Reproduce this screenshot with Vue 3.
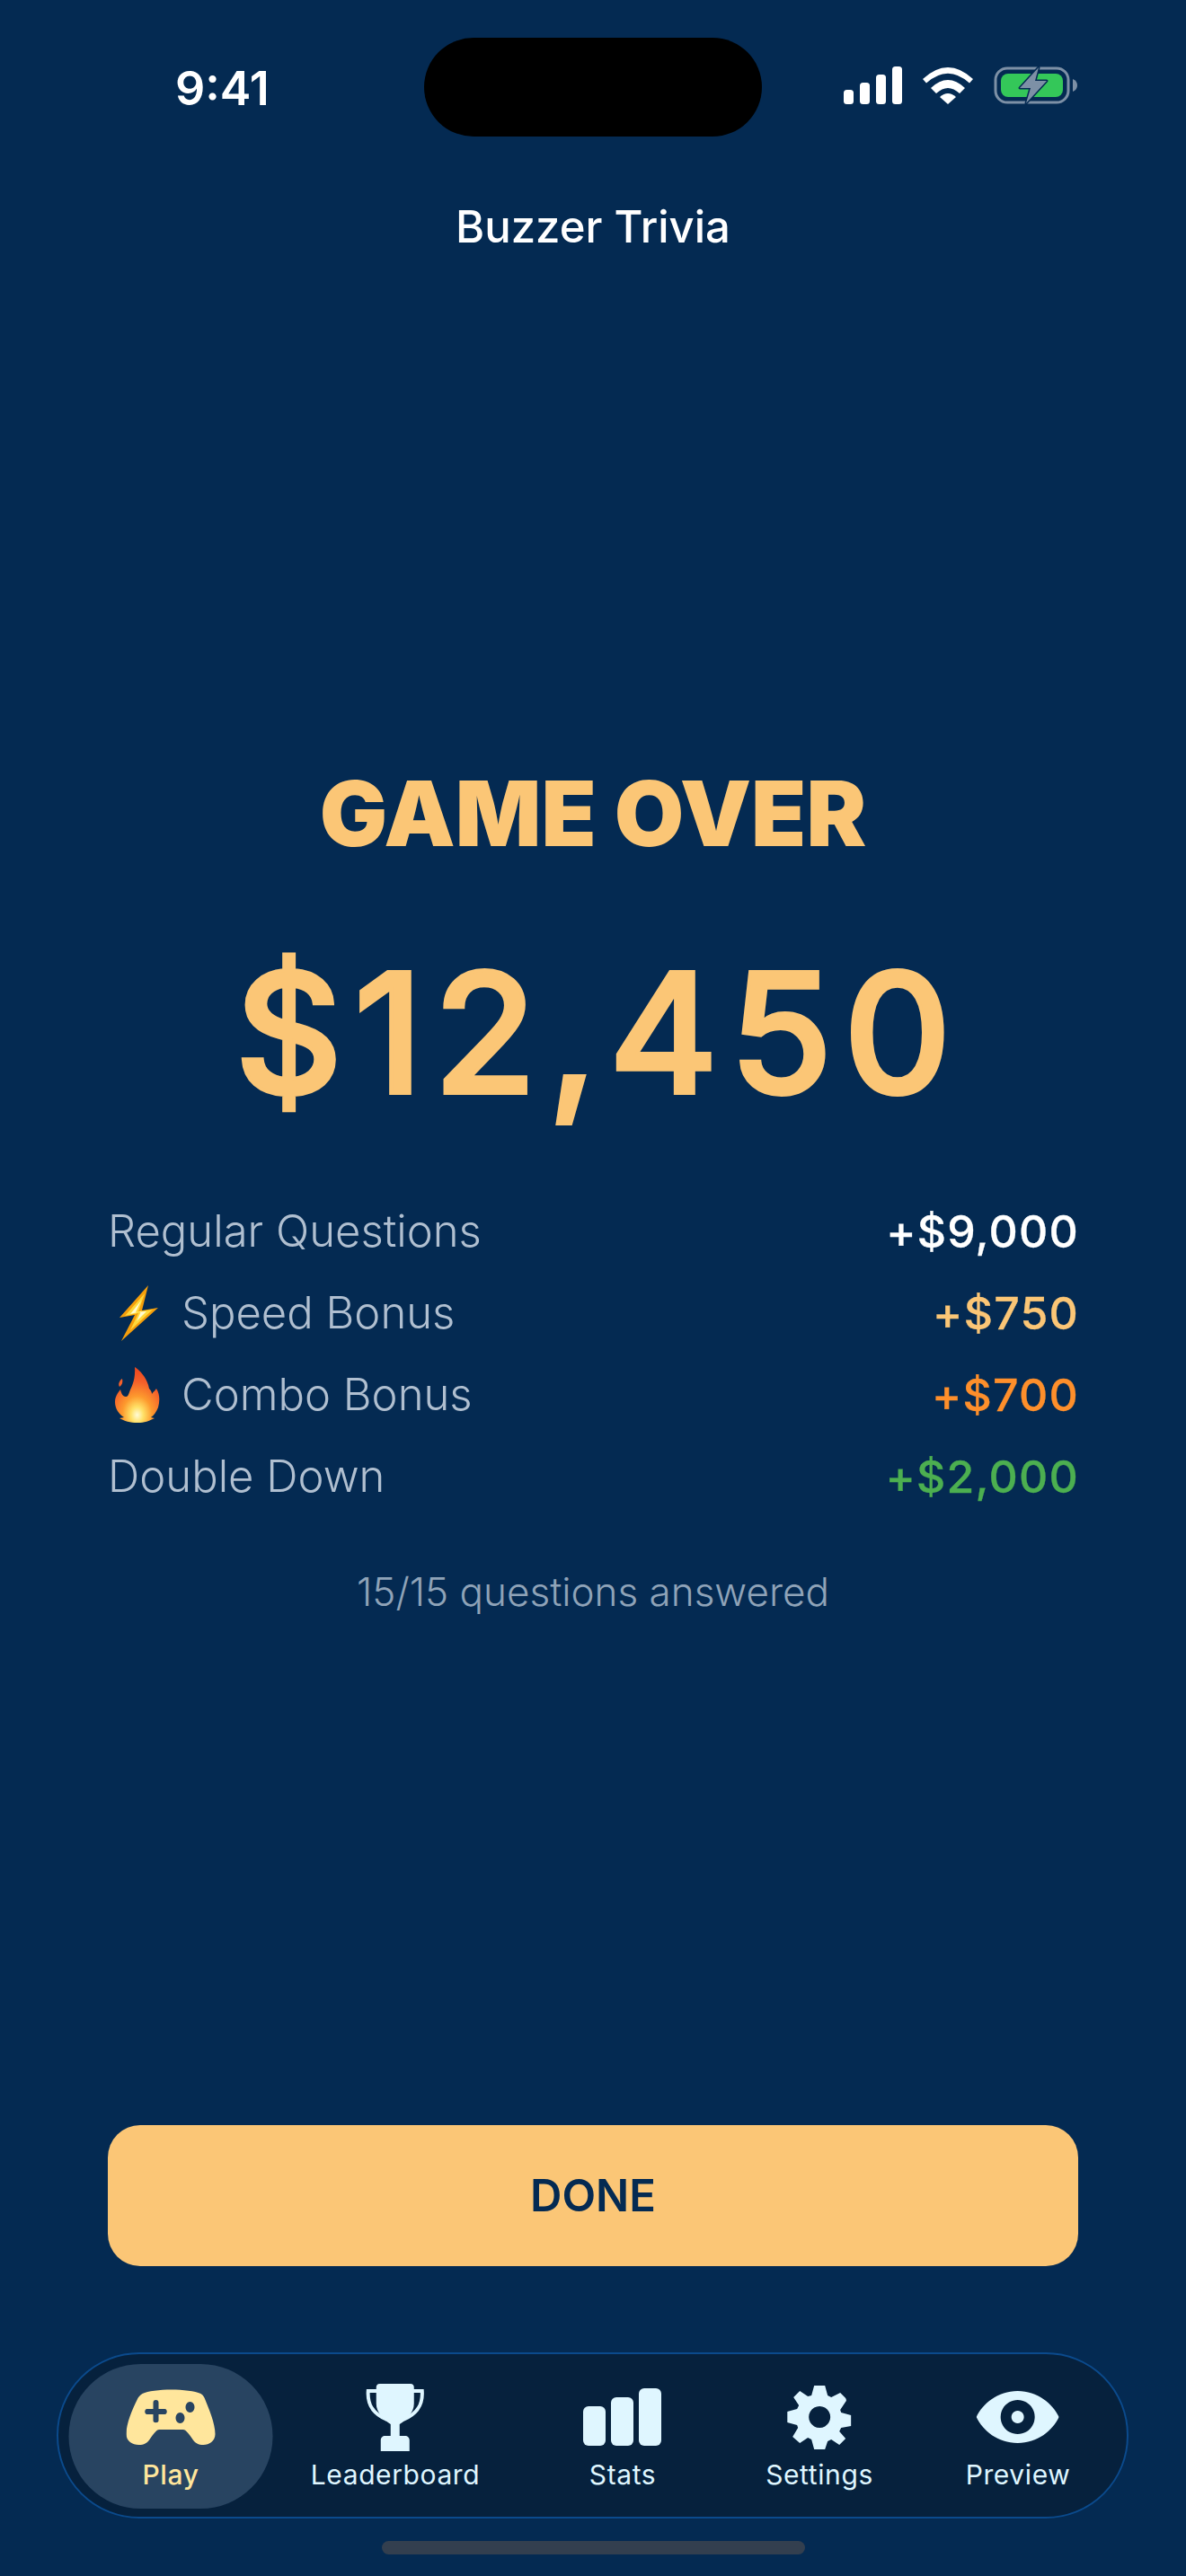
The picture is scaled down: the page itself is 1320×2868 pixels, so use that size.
<template>
  <div class="screen">
    <div class="status">
      <span class="time">9:41</span>
      <div class="island"></div>
      <div class="status-icons">
        <svg width="66" height="42" viewBox="0 0 66 42">
          <rect x="1" y="26" width="11" height="16" rx="3.5" fill="#fff" />
          <rect x="19" y="18" width="11" height="24" rx="3.5" fill="#fff" />
          <rect x="37" y="9" width="11" height="33" rx="3.5" fill="#fff" />
          <rect x="55" y="0" width="11" height="42" rx="3.5" fill="#fff" />
        </svg>
        <svg width="58" height="42" viewBox="0 0 58 42">
          <path d="M1 14 Q29 -12 57 14 L53 18.500 Q29 -3 5 18.500 Z" fill="#fff" />
          <path d="M10 24 Q29 6 48 24 L42 30 Q29 18 16 30 Z" fill="#fff" />
          <path d="M20 34 Q29 26 38 34 L29 42 Z" fill="#fff" />
        </svg>
        <svg width="94" height="44" viewBox="0 0 94 44">
          <rect x="2" y="3" width="81" height="38" rx="13" fill="none" stroke="#7d90a6" stroke-width="3" />
          <rect x="8" y="9" width="69" height="26" rx="8" fill="#34c759" />
          <path d="M88 15 Q93 17 93 22 Q93 27 88 29 Z" fill="#7d90a6" />
          <path d="M50 2 L29 25 H41 L36 42 L59 17 H46 Z" fill="#7d90a6" stroke="#042a52" stroke-width="3" stroke-linejoin="round" paint-order="stroke" />
        </svg>
      </div>
    </div>

    <div class="title">Buzzer Trivia</div>

    <div class="result">
      <h1 class="over">GAME OVER</h1>
      <div class="total">$12,450</div>

      <div class="rows">
        <div v-for="row in rows" :key="row.label" class="row">
          <span class="label">
            <svg v-if="row.icon === 'bolt'" class="emoji" viewBox="0 0 50 62">
              <path d="M37 0 L5 36 L22 33 L7 62 L48 25 L30 28 Z" fill="#f59e0b" />
              <path d="M33 9 L11 34 L26 31 L17 50 L42 27 L26 29 Z" fill="#ffd93b" />
              <path d="M29 17 L17 32 L29 29 L24 40 L35 29 L23 30 Z" fill="#fffbd0" />
            </svg>
            <svg v-if="row.icon === 'fire'" class="emoji" viewBox="0 0 50 62">
              <defs>
                <radialGradient id="flame" cx="0.5" cy="0.86" r="0.8">
                  <stop offset="0" stop-color="#fffbd6" />
                  <stop offset="0.18" stop-color="#ffe066" />
                  <stop offset="0.42" stop-color="#fd9a2e" />
                  <stop offset="0.75" stop-color="#f4602a" />
                  <stop offset="1" stop-color="#ee4a20" />
                </radialGradient>
              </defs>
              <path d="M5 22 C3 19 5 15 8 13 C9 17 8 20 5 22 Z" fill="#f4602a" />
              <path d="M22 0 C27 3 36 12 38 24 C40 26 41 28 41 30 C43 27 45 26 46 24 C50 30 50 38 48 45 C46 50 43 54 40 56 L44 57 C38 60 33 62 25 62 C17 62 10 60 5 57 L10 56 C4 52 0 46 0 39 C0 33 3 29 6 25 C7 30 9 33 12 33 C14 33 15 31 16 28 C18 22 23 16 22 0 Z" fill="url(#flame)" />
            </svg>
            {{ row.label }}
          </span>
          <span class="value" :style="{ color: row.color }">{{ row.value }}</span>
        </div>
      </div>

      <p class="answered">15/15 questions answered</p>
    </div>

    <button class="done">DONE</button>

    <nav class="tabbar">
      <div v-for="tab in tabs" :key="tab.name" class="tab" :class="[tab.cls, { active: tab.active }]">
        <div class="tab-icon">
          <svg v-if="tab.name === 'Play'" width="100" height="62" viewBox="0 0 100 62">
            <path fill-rule="evenodd" fill="#ffe69c" d="M18 5 C30 -1 70 -1 83 5 C86 7 87 9 88 12 C92 22 99 38 99 50 C99 58 92 62 86 62 C80 62 77 60 74 56 C72 53 70 50 67 47 C65 45 64 45 62 45 H38 C36 45 35 45 33 47 C30 50 28 53 26 56 C23 60 20 62 14 62 C7 62 0 58 0 50 C0 38 7 22 12 12 C13 9 15 7 18 5 Z M33 12 C31 12 30 13 30 15 V22 H23 C20 22 20 28 23 28 H30 V35 C30 38 36 38 36 35 V28 H43 C46 28 46 22 43 22 H36 V15 C36 13 35 12 33 12 Z M71 14 A5 6 0 1 0 71.010 14 Z M60 26 A5 6 0 1 0 60.010 26 Z" />
          </svg>
          <svg v-if="tab.name === 'Leaderboard'" width="66" height="75" viewBox="0 0 66 75">
            <path fill="none" stroke="#dff6ff" stroke-width="4" d="M13 8 H3 C2 22 7 33 24 40 M53 8 H63 C64 22 59 33 42 40" />
            <path fill="#dff6ff" d="M16 0 H50 C53 0 54 2 54 4 V22 C54 32 46 40 38 45 V58 H44 C47 58 49 60 49 63 V75 H17 V63 C17 60 19 58 22 58 H28 V45 C20 40 12 32 12 22 V4 C12 2 13 0 16 0 Z" />
          </svg>
          <svg v-if="tab.name === 'Stats'" width="88" height="64" viewBox="0 0 88 64">
            <rect x="0" y="20" width="25" height="44" rx="6" fill="#dff6ff" />
            <rect x="31" y="10" width="25" height="54" rx="6" fill="#dff6ff" />
            <rect x="62" y="0" width="25" height="64" rx="6" fill="#dff6ff" />
          </svg>
          <svg v-if="tab.name === 'Settings'" width="72" height="72" viewBox="0 0 72 72">
            <path fill-rule="evenodd" fill="#dff6ff" d="M30 1 H42 L45 12 L49 14 L59 9 L65 15 C66 17 66 18 65 19 L59 28 L60 31 L71 34 V46 L60 48 L58 52 L65 60 L58 67 L49 61 L45 63 L42 72 H30 L27 61 L23 59 L14 65 L6 58 L12 48 L11 45 L0 42 V30 L11 27 L13 23 L7 14 L14 7 L23 13 L27 12 Z M36 24 A12 12 0 1 0 36.010 24 Z" />
          </svg>
          <svg v-if="tab.name === 'Preview'" width="92" height="58" viewBox="0 0 92 58">
            <path fill-rule="evenodd" fill="#dff6ff" d="M46 0 C68 0 85 14 92 29 C85 44 68 58 46 58 C24 58 7 44 0 29 C7 14 24 0 46 0 Z M46 10 A19 19 0 1 0 46.010 10 Z M46 22 A7 7 0 1 1 45.990 22 Z" />
          </svg>
        </div>
        <span class="tab-label">{{ tab.name }}</span>
      </div>
    </nav>

    <div class="home-bar"></div>
  </div>
</template>

<script setup>
const rows = [
  { label: 'Regular Questions', value: '+$9,000', color: '#ffffff' },
  { label: 'Speed Bonus', value: '+$750', color: '#fbc676', icon: 'bolt' },
  { label: 'Combo Bonus', value: '+$700', color: '#fe8f2b', icon: 'fire' },
  { label: 'Double Down', value: '+$2,000', color: '#4caf50' },
]

const tabs = [
  { name: 'Play', cls: 'play', active: true },
  { name: 'Leaderboard', cls: 'leader' },
  { name: 'Stats', cls: 'stats' },
  { name: 'Settings', cls: 'settings' },
  { name: 'Preview', cls: 'preview' },
]
</script>

<style>
html,
body {
  margin: 0;
  background: #042a52;
}
</style>

<style scoped>
.screen {
  width: 1320px;
  height: 2868px;
  background: #042a52;
  font-family: Inter, "Noto Sans", sans-serif;
  color: #fff;
  display: flex;
  flex-direction: column;
  overflow: hidden;
}
.status {
  height: 110px;
  padding-top: 42px;
  display: flex;
  position: relative;
  box-sizing: content-box;
}
.time {
  margin-left: 195px;
  width: 277px;
  font-size: 52px;
  font-weight: 600;
  line-height: 114px;
}
.island {
  width: 376px;
  height: 110px;
  border-radius: 55px;
  background: #000;
}
.status-icons {
  margin-left: 90px;
  height: 110px;
  display: flex;
  align-items: center;
  gap: 22px;
  padding-bottom: 4px;
  box-sizing: border-box;
}
.title {
  margin-top: 71px;
  text-align: center;
  font-size: 49px;
  font-weight: 500;
  line-height: 60px;
}
.result {
  margin-top: 563px;
  display: flex;
  flex-direction: column;
  align-items: center;
}
.over {
  margin: 0;
  font-size: 100px;
  font-weight: 900;
  line-height: 120px;
  color: #fbc676;
}
.total {
  margin-top: 68px;
  padding-left: 12px;
  font-size: 186px;
  font-weight: 500;
  line-height: 232px;
  letter-spacing: 12px;
  color: #fbc676;
  -webkit-text-stroke: 4px #fbc676;
}
.rows {
  margin-top: 75px;
  width: 1080px;
  display: flex;
  flex-direction: column;
  gap: 31px;
}
.row {
  display: flex;
  justify-content: space-between;
  align-items: center;
  height: 60px;
  font-size: 49px;
  line-height: 60px;
}
.label {
  color: #b0bfd0;
  font-weight: 350;
  display: flex;
  align-items: center;
}
.emoji {
  width: 50px;
  height: 62px;
  margin-left: 8px;
  margin-right: 24px;
}
.value {
  font-weight: 500;
  font-size: 50px;
  letter-spacing: 1.2px;
  margin-right: -1px;
  -webkit-text-stroke: 0.3px currentColor;
}
.answered {
  margin: 70px 0 0;
  font-size: 44px;
  line-height: 56px;
  font-weight: 350;
  color: #8fa3b8;
}
.done {
  position: absolute;
  left: 120px;
  top: 2366px;
  width: 1080px;
  height: 157px;
  border: 0;
  border-radius: 36px;
  background: #fbc676;
  color: #042a52;
  font-family: inherit;
  font-size: 49px;
  font-weight: 600;
}
.tabbar {
  position: absolute;
  left: 63px;
  top: 2619px;
  width: 1193px;
  height: 185px;
  box-sizing: border-box;
  border: 2px solid #0b4a8c;
  border-radius: 92px;
  background: #06213d;
}
.tab {
  position: absolute;
  top: 11px;
  height: 161px;
  padding-top: 19px;
  display: flex;
  flex-direction: column;
  align-items: center;
  box-sizing: border-box;
  transform: translateX(-50%);
  white-space: nowrap;
}
.tab-icon {
  height: 80px;
  display: flex;
  align-items: center;
  justify-content: center;
}
.play { left: 125px; width: 227px; }
.leader { left: 375px; }
.stats { left: 628px; }
.settings { left: 847px; }
.preview { left: 1068px; }
.tab.active {
  border-radius: 80px;
  background: #284461;
}
.tab-label {
  margin-top: 6px;
  font-size: 30px;
  line-height: 36px;
  font-weight: 400;
  letter-spacing: 0.6px;
  color: #dff6ff;
}
.active .tab-label {
  color: #ffe69c;
  font-weight: 500;
}
.home-bar {
  position: absolute;
  left: 425px;
  top: 2829px;
  width: 471px;
  height: 15px;
  border-radius: 8px;
  background: #333f4f;
}
</style>
